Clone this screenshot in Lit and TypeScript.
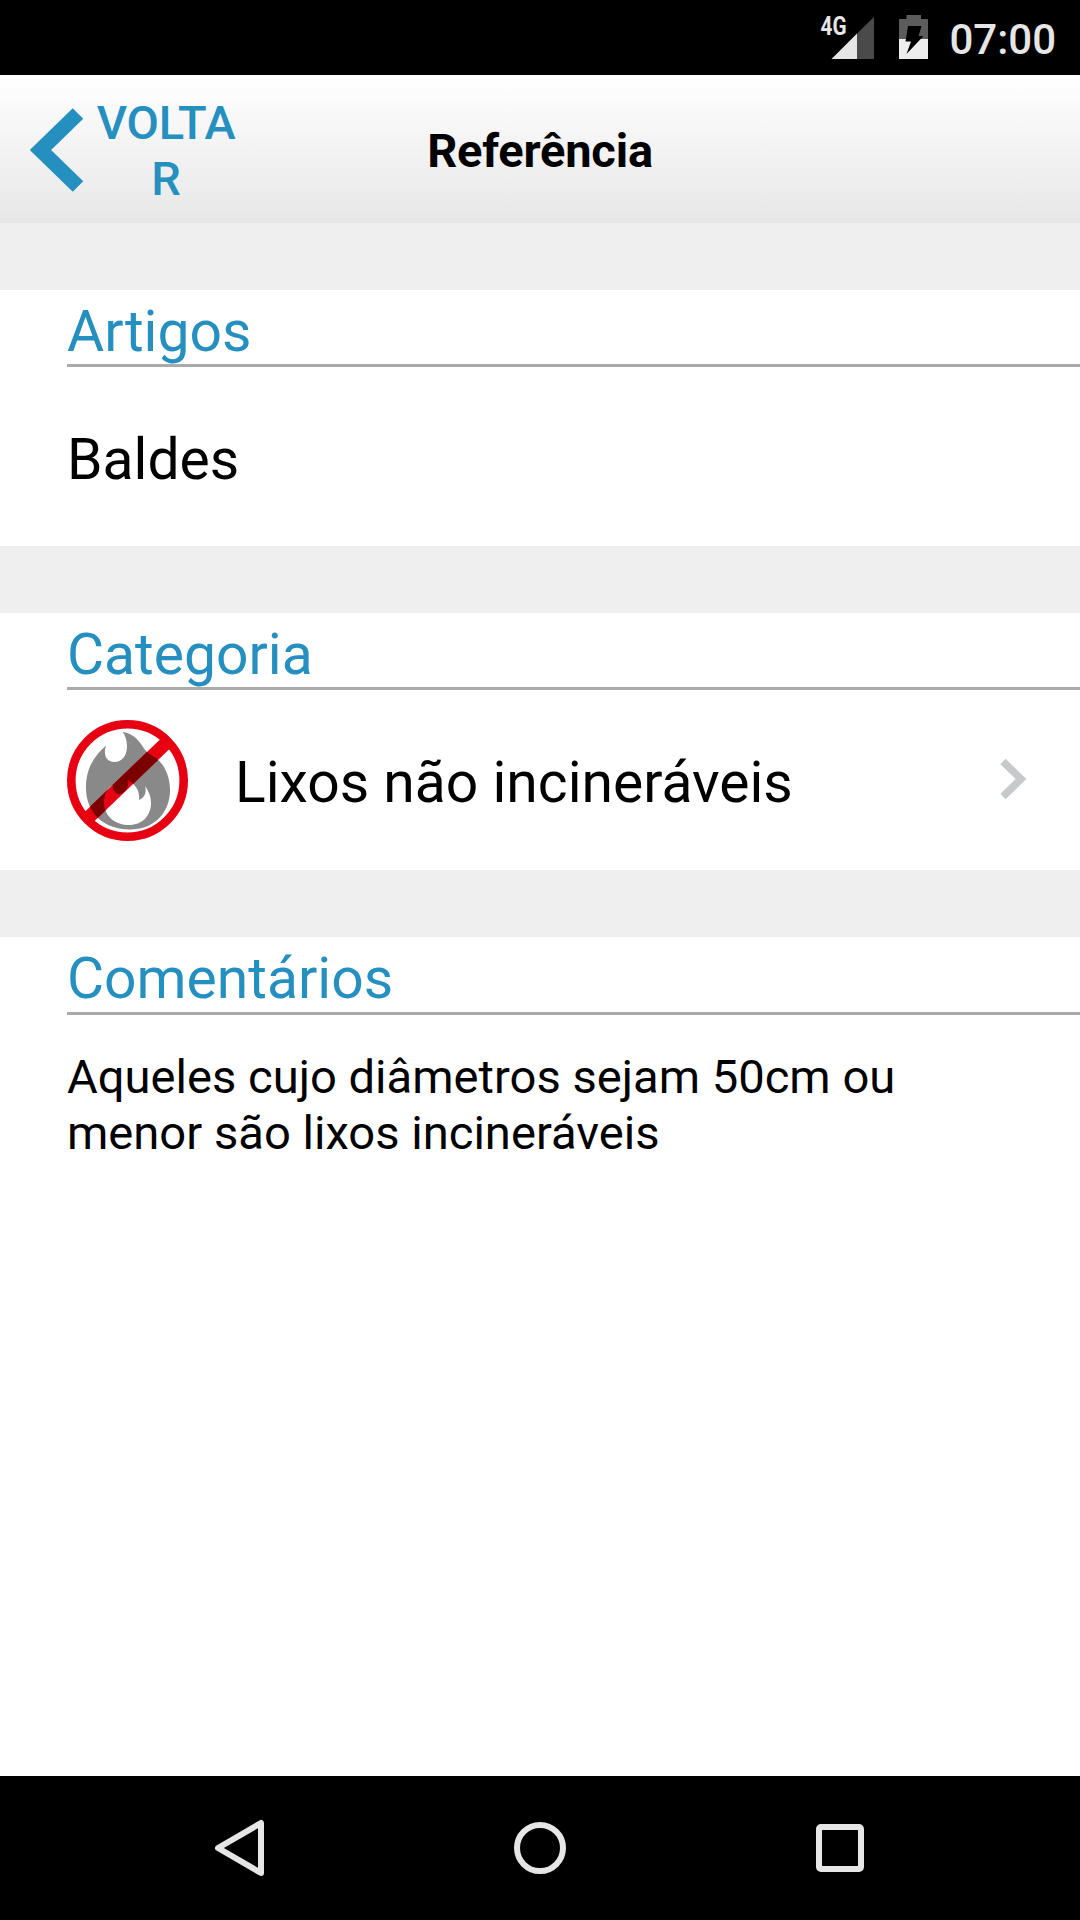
import { LitElement, html, css } from "lit";
import { customElement } from "lit/decorators.js";

@customElement("app-root")
export class AppRoot extends LitElement {
  static styles = css`
    :host {
      display: flex;
      flex-direction: column;
      width: 1080px;
      height: 1920px;
      overflow: hidden;
      background: #fff;
      color: #000;
      font-family: Roboto, "Liberation Sans", sans-serif;
    }
    * { box-sizing: border-box; }
    svg { display: block; flex: none; }
    .status {
      flex: none;
      height: 75px;
      background: #000;
      color: #e6e6e6;
      display: flex;
      align-items: center;
      justify-content: flex-end;
      padding-right: 24px;
    }
    .status-icons { margin-right: 14px; }
    .network { font-size: 25px; font-weight: 700; }
    .clock { font-size: 42px; line-height: 50px; font-weight: 500; padding-top: 4px; }
    .header {
      flex: none;
      height: 148px;
      background: linear-gradient(#ffffff, #e7e7e7);
      display: grid;
      grid-template-columns: 300px 1fr 300px;
      align-items: center;
    }
    .back {
      display: flex;
      align-items: center;
      padding-left: 30px;
      gap: 11px;
      color: #258fc0;
    }
    .back-label {
      width: 142px;
      padding-top: 4px;
      font-size: 47px;
      line-height: 56px;
      font-weight: 500;
      text-align: center;
      word-break: break-all;
      letter-spacing: -0.2px;
    }
    .title {
      margin: 0;
      padding-top: 4px;
      text-align: center;
      font-size: 47px;
      line-height: 56px;
      font-weight: 700;
      letter-spacing: -0.2px;
    }
    .content { flex: 1; }
    .gap { height: 67px; background: #efefef; }
    .heading {
      margin: 0 0 0 67px;
      height: 77px;
      padding-top: 8px;
      border-bottom: 3px solid #aaa;
      color: #258fc0;
      font-size: 57px;
      line-height: 67px;
      font-weight: 400;
    }
    .heading.tall { height: 78px; }
    .row {
      height: 179px;
      padding: 0 52px 0 67px;
      display: flex;
      align-items: center;
      font-size: 57px;
      line-height: 67px;
    }
    .row.link { height: 180px; }
    .row-label { flex: 1; padding-top: 6px; }
    .link .row-label { padding: 5px 0 0 47px; }
    .comment {
      margin: 0;
      padding: 34px 67px;
      font-size: 47.15px;
      line-height: 56px;
    }
    .nav {
      flex: none;
      height: 144px;
      background: #000;
      display: flex;
      align-items: center;
      justify-content: center;
    }
  `;

  private section(title: string, body: unknown, headingClass = "heading") {
    return html`
      <div class="gap"></div>
      <section>
        <h2 class=${headingClass}>${title}</h2>
        ${body}
      </section>
    `;
  }

  private noBurnIcon() {
    const flame =
      "M55.700 12C64 13 70 18 74.700 25C78 31 83 35 89 38C98 45 103 57 103 70C103 94 86 109.500 63 109.500C37 109.500 19 93 19 68C19 48 27 36 39 25.700C36 34 39 42 47 42C55 42 60 36 60 26C60 20 58 15 55.700 12z" +
      "M46 65C39 69 37 75 37 84C38 97 49 105 62 105C75 105 84 96 84 83C84 77 82 71 78 66C80 73 77 78 72 80C73 71 69 65 61 60C62 67 59 73 53 74C48 74 45 70 46 65z";
    return html`
      <svg width="121" height="121" viewBox="0 0 121 121">
        <defs>
          <clipPath id="flame"><path d=${flame} clip-rule="evenodd" /></clipPath>
        </defs>
        <path d=${flame} fill="#898989" fill-rule="evenodd" />
        <path d="M20 99L99 23" stroke="#e60012" stroke-width="13.500" />
        <path d="M20 99L99 23" stroke="#7d0000" stroke-width="13.500" clip-path="url(#flame)" />
        <circle cx="60.500" cy="60.500" r="56.200" fill="none" stroke="#e60012" stroke-width="8.600" />
      </svg>
    `;
  }

  render() {
    return html`
      <div class="status">
        <svg class="status-icons" width="120" height="75" viewBox="815 0 120 75">
          <text class="network" x="820.500" y="35" textLength="26" lengthAdjust="spacingAndGlyphs" fill="#e6e6e6">4G</text>
          <path d="M857 33.500L874 17V59H857z" fill="#4a4a4a" />
          <path d="M857 33.500V59H831.500z" fill="#e6e6e6" />
          <path d="M899 19h7.500v-4h14.500v4h7v20H899z" fill="#5c5c5c" />
          <path d="M899 39h29v20H899z" fill="#eee" />
          <path d="M908 26H921.500L918.500 36H923.500L906.500 54L911 41.500H905.500z" fill="#000" />
        </svg>
        <span class="clock">07:00</span>
      </div>
      <header class="header">
        <div class="back">
          <svg width="54" height="86" viewBox="0 0 54 86">
            <path d="M48 7.500L10.500 44L48 80.500" fill="none" stroke="#258fc0" stroke-width="15" />
          </svg>
          <span class="back-label">VOLTAR</span>
        </div>
        <h1 class="title">Referência</h1>
      </header>
      <main class="content">
        ${this.section("Artigos", html`<div class="row"><span class="row-label">Baldes</span></div>`)}
        ${this.section(
          "Categoria",
          html`<div class="row link">
            ${this.noBurnIcon()}
            <span class="row-label">Lixos não incineráveis</span>
            <svg width="30" height="44" viewBox="0 0 30 44">
              <path d="M5 3.500L23 21L5 38.500" fill="none" stroke="#c8c9ca" stroke-width="7.500" />
            </svg>
          </div>`
        )}
        ${this.section(
          "Comentários",
          html`<p class="comment">Aqueles cujo diâmetros sejam 50cm ou menor são lixos incineráveis</p>`,
          "heading tall"
        )}
      </main>
      <nav class="nav">
        <svg width="1080" height="144" viewBox="0 0 1080 144" fill="none" stroke="#e6e6e6" stroke-width="6">
          <path d="M261 47V97L218 72z" stroke-linejoin="round" />
          <circle cx="540" cy="72" r="23" />
          <rect x="819" y="51" width="42" height="42" rx="2" />
        </svg>
      </nav>
    `;
  }
}
